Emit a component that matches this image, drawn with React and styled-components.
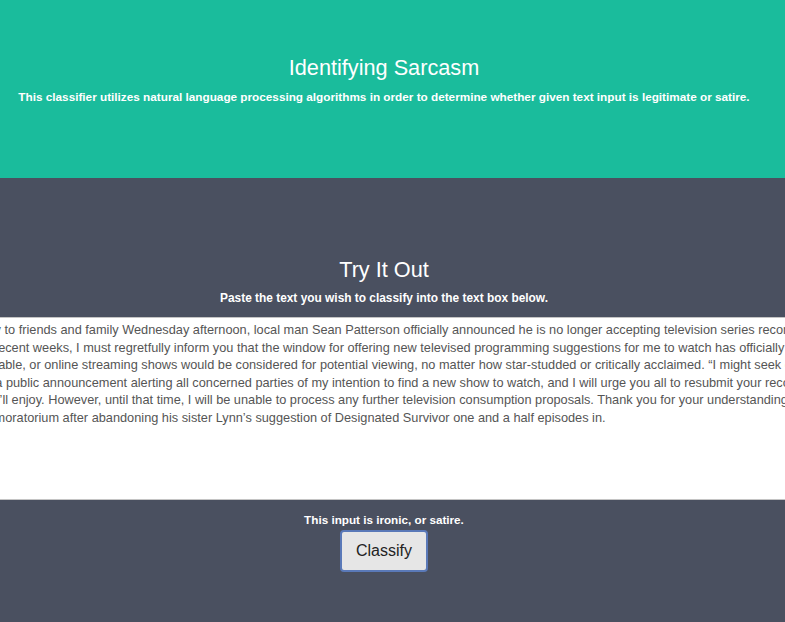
import React from 'react';
import styled, { createGlobalStyle } from 'styled-components';

const GlobalStyle = createGlobalStyle`
  html, body {
    margin: 0;
    padding: 0;
    overflow: hidden;
  }
  body {
    font-family: "Liberation Sans", Arial, sans-serif;
  }
`;

const Page = styled.div`
  min-height: 100vh;
  background-color: #4a5060;
  overflow: hidden;
`;

const Hero = styled.header`
  box-sizing: border-box;
  height: 178px;
  padding: 55px 17px 0 0;
  background-color: #1abc9c;
  color: #fff;
  text-align: center;
`;

const Heading = styled.h1`
  margin: 0;
  font-size: 21.7px;
  line-height: 26px;
  font-weight: normal;
`;

const Lead = styled.p`
  margin: 8px 0 0;
  font-size: ${(p) => (p.$small ? '11.75px' : '11.9px')};
  line-height: 15px;
  font-weight: bold;
`;

const Section = styled.section`
  display: flex;
  flex-direction: column;
  align-items: center;
  padding: 79px 17px 0 0;
  color: #fff;
  text-align: center;
`;

const InputRow = styled.div`
  display: flex;
  justify-content: center;
  width: 785px;
  margin-top: 11px;
  margin-right: -17px;
`;

const TextBox = styled.textarea`
  flex-shrink: 0;
  box-sizing: border-box;
  width: 996px;
  height: 183px;
  margin: 0;
  padding: 3px 2px;
  border: 1px solid #c4c4c4;
  background: #fff;
  color: #555;
  font-family: "Liberation Sans", Arial, sans-serif;
  font-size: 12.75px;
  line-height: 17.5px;
  white-space: pre;
  overflow: hidden;
  resize: none;
  outline: none;
`;

const Result = styled.p`
  margin: 13px 0 0;
  font-size: 11.7px;
  line-height: 14px;
  font-weight: bold;
`;

const Button = styled.button`
  box-sizing: border-box;
  height: 42px;
  margin-top: 3px;
  padding: 0 14px;
  border: 2px solid #5a79b8;
  border-radius: 4px;
  background-color: #e6e6e6;
  color: #222;
  font-family: "Liberation Sans", Arial, sans-serif;
  font-size: 16px;
  cursor: pointer;
`;

const sample = [
  'Speaking candidly to friends and family Wednesday afternoon, local man Sean Patterson officially announced he is no longer accepting television series recommendations. “After careful consideration of all the suggestions I',
  'have received in recent weeks, I must regretfully inform you that the window for offering new televised programming suggestions for me to watch has officially closed,” said Patterson, adding',
  'that no network, cable, or online streaming shows would be considered for potential viewing, no matter how star-studded or critically acclaimed. “I might seek out something new at some',
  'point, I will make a public announcement alerting all concerned parties of my intention to find a new show to watch, and I will urge you all to resubmit your recommendations for shows or',
  'movies you think I’ll enjoy. However, until that time, I will be unable to process any further television consumption proposals. Thank you for your understanding.” At press time, Patterson had entered',
  'the self-imposed moratorium after abandoning his sister Lynn’s suggestion of Designated Survivor one and a half episodes in.',
].join('\n');

const App = () => {
  return (
    <Page>
      <GlobalStyle />
      <Hero>
        <Heading>Identifying Sarcasm</Heading>
        <Lead $small>
          This classifier utilizes natural language processing algorithms in order to determine whether given text input is legitimate or satire.
        </Lead>
      </Hero>
      <Section>
        <Heading>Try It Out</Heading>
        <Lead>Paste the text you wish to classify into the text box below.</Lead>
        <InputRow>
          <TextBox wrap="off" defaultValue={sample} spellCheck={false} />
        </InputRow>
        <Result>This input is ironic, or satire.</Result>
        <Button type="button">Classify</Button>
      </Section>
    </Page>
  );
};

export default App;
